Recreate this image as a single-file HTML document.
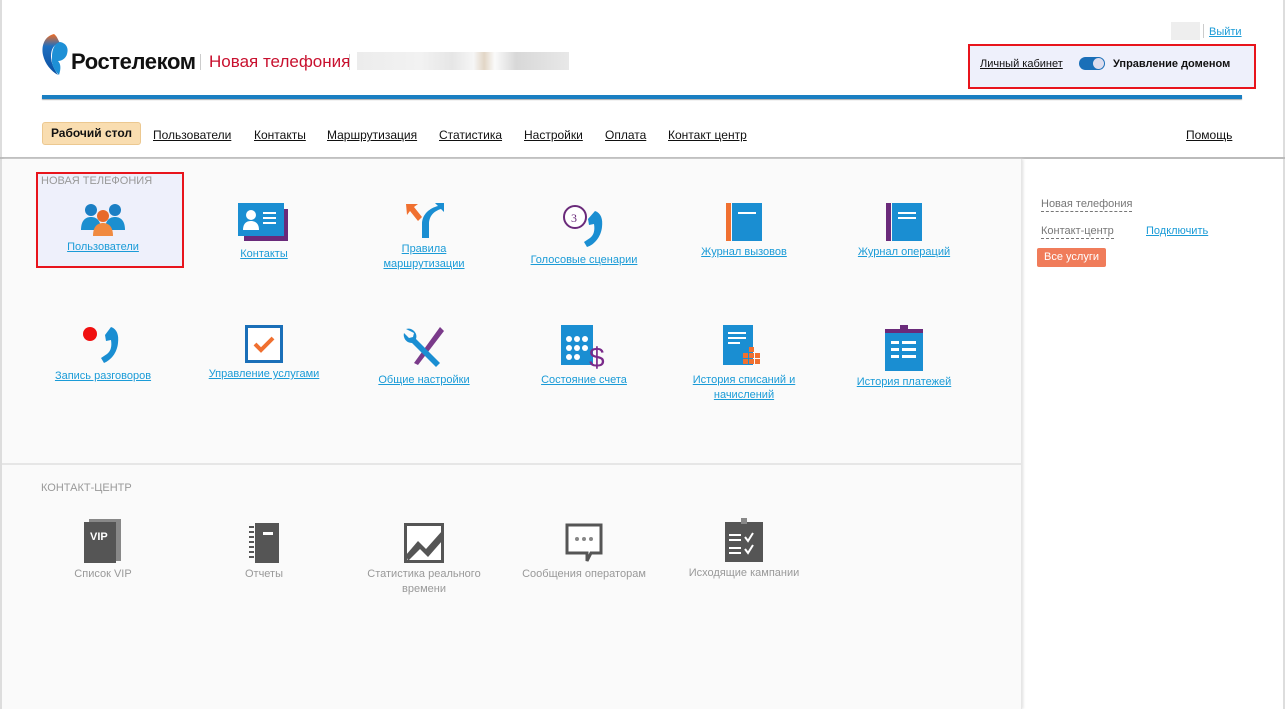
<!DOCTYPE html>
<html><head><meta charset="utf-8"><style>
*{margin:0;padding:0;box-sizing:border-box}
body{width:1285px;height:709px;overflow:hidden;background:#fff;font-family:"Liberation Sans",Arial,sans-serif;font-size:12px}
.a{position:absolute}
a{color:#1a9bd7;text-decoration:underline}
.nav a{color:#111;position:absolute;top:128px;font-size:12px}
.item{position:absolute;width:160px;text-align:center;font-size:11px;line-height:15px}
.item svg{display:block;margin:0 auto 4px}
.g{color:#999}
</style></head><body>
<div class="a" style="left:0;top:0;width:2px;height:709px;background:#ddd"></div>
<div class="a" style="left:1283px;top:0;width:2px;height:709px;background:#ddd"></div>
<!-- header -->
<svg class="a" style="left:40px;top:33px" width="30" height="44" viewBox="0 0 30 44"><defs><linearGradient id="lg" x1="0" y1="0" x2="0" y2="1"><stop offset="0" stop-color="#f36c21"/><stop offset=".3" stop-color="#1e6fc0"/><stop offset="1" stop-color="#0a4ea0"/></linearGradient></defs><path d="M14 1C5 3 1 12 3 22c2 9 8 16 15 20-4-6-7-12-7-19 0-7 3-12 9-13C18 7 17 3 14 1z" fill="url(#lg)"/><path d="M20 9c6 1 9 6 7 12-1 4-5 7-9 7 3 3 3 8 1 14-5-5-8-11-7-18 0-8 3-14 8-15z" fill="#1e90d6"/></svg>
<div class="a" style="left:71px;top:49px;font-size:22px;font-weight:bold;color:#111;letter-spacing:-0.4px">Ростелеком</div>
<div class="a" style="left:200px;top:54px;width:1px;height:16px;background:#ccc"></div>
<div class="a" style="left:209px;top:52px;font-size:17px;color:#c8102e">Новая телефония</div>
<div class="a" style="left:349px;top:54px;width:1px;height:16px;background:#ccc"></div>
<div class="a" style="left:357px;top:52px;width:212px;height:18px;background:linear-gradient(90deg,#ececec,#f2f2f2 30%,#e6e6e6 45%,#f6f6f6 55%,#e2d6c6 60%,#fafafa 65%,#d8d8d8 75%,#e8e8e8)"></div>
<div class="a" style="left:1171px;top:22px;width:29px;height:18px;background:#eee"></div>
<div class="a" style="left:1203px;top:24px;width:1px;height:14px;background:#ccc"></div>
<a class="a" style="left:1209px;top:26px;font-size:11px" href="#">Выйти</a>
<div class="a" style="left:968px;top:44px;width:288px;height:45px;border:2px solid #e8141c;background:#eef0fb"></div>
<a class="a" style="left:980px;top:58px;color:#111;font-size:11px" href="#">Личный кабинет </a>
<div class="a" style="left:1079px;top:57px;width:26px;height:13px;border-radius:7px;background:#1a6fb8"><div style="position:absolute;right:1px;top:1px;width:11px;height:11px;border-radius:50%;background:#dde"></div></div>
<div class="a" style="left:1113px;top:58px;font-size:11px;font-weight:bold;color:#111">Управление доменом</div>
<div class="a" style="left:42px;top:95px;width:1200px;height:4px;background:#1a7fc2;box-shadow:0 1px 1px #aaa"></div>
<div class="a" style="left:42px;top:122px;width:99px;height:23px;background:#f9ddb0;border:1px solid #ecc890;border-radius:3px;font-weight:bold;text-align:center;line-height:21px;color:#111">Рабочий стол</div>
<div class="nav"><a style="left:153px">Пользователи</a><a style="left:254px">Контакты</a><a style="left:327px">Маршрутизация</a><a style="left:439px">Статистика</a><a style="left:524px">Настройки</a><a style="left:605px">Оплата</a><a style="left:668px">Контакт центр</a><a style="left:1186px">Помощь</a></div>
<div class="a" style="left:0;top:157px;width:1285px;height:2px;background:#bbb"></div>
<!-- content -->
<div class="a" style="left:2px;top:159px;width:1020px;height:550px;background:#fafafa;border-right:1px solid #e6e6e6;box-shadow:1px 0 3px #ddd"></div>
<div class="a" style="left:2px;top:463px;width:1020px;height:2px;background:#e6e6e6"></div>
<div class="a" style="left:36px;top:172px;width:148px;height:96px;border:2px solid #e8141c;background:#eef0fb"></div>
<div class="a g" style="left:41px;top:175px;font-size:11px">НОВАЯ ТЕЛЕФОНИЯ</div>
<div class="a g" style="left:41px;top:482px;font-size:11px">КОНТАКТ-ЦЕНТР</div>

<div class="item" style="left:23px;top:202px"><svg width="44" height="34" viewBox="0 0 44 34"><circle cx="10" cy="8" r="6" fill="#1b7fc4"/><path d="M0 28c0-9 4-13 10-13s10 4 10 13z" fill="#1b8fd0"/><circle cx="34" cy="8" r="6" fill="#1b7fc4"/><path d="M24 28c0-9 4-13 10-13s10 4 10 13z" fill="#1b8fd0"/><circle cx="22" cy="14" r="6" fill="#e86a2a"/><path d="M12 34c0-9 4-13 10-13s10 4 10 13z" fill="#f08a40"/></svg><a href="#">Пользователи</a></div>
<div class="item" style="left:184px;top:203px"><svg width="52" height="40" viewBox="0 0 52 40"><rect x="6" y="6" width="44" height="32" fill="#6a2a7a"/><rect x="0" y="0" width="46" height="33" fill="#1a8ed2"/><circle cx="13" cy="12" r="5" fill="#fff"/><path d="M5 27c0-7 4-9 8-9s8 2 8 9z" fill="#fff"/><rect x="25" y="9" width="13" height="2" fill="#fff"/><rect x="25" y="14" width="13" height="2" fill="#fff"/><rect x="25" y="19" width="13" height="2" fill="#fff"/></svg><a href="#">Контакты</a></div>
<div class="item" style="left:344px;top:202px"><svg width="40" height="36" viewBox="0 0 40 36"><path d="M2 2l12 0-4 3 8 10-4 4-8-10-3 4z" fill="#f07030"/><path d="M18 36V22c0-10 8-16 16-18l-3-3h9v9l-3-3c-7 2-12 7-12 15v14z" fill="#1a8ed2"/></svg><a href="#">Правила<br>маршрутизации</a></div>
<div class="item" style="left:504px;top:203px"><svg width="46" height="46" viewBox="0 0 46 46"><circle cx="14" cy="14" r="11" fill="#fff" stroke="#6a2a7a" stroke-width="2"/><text x="10" y="19" font-size="12" font-family="Liberation Serif" fill="#6a2a7a">3</text><path d="M34 8c6 2 8 8 7 16-1 10-8 18-15 20l-3-5 6-4c4-3 5-8 4-14l-5 1-1-6z" fill="#1a8ed2"/></svg><a href="#">Голосовые сценарии</a></div>
<div class="item" style="left:664px;top:203px"><svg width="36" height="38" viewBox="0 0 36 38"><rect x="0" y="0" width="5" height="38" fill="#f07030"/><rect x="6" y="0" width="30" height="38" fill="#1a8ed2"/><rect x="12" y="9" width="18" height="2" fill="#fff"/></svg><a href="#">Журнал вызовов</a></div>
<div class="item" style="left:824px;top:203px"><svg width="36" height="38" viewBox="0 0 36 38"><rect x="0" y="0" width="5" height="38" fill="#6a2a7a"/><rect x="6" y="0" width="30" height="38" fill="#1a8ed2"/><rect x="12" y="9" width="18" height="2" fill="#fff"/><rect x="12" y="14" width="18" height="2" fill="#fff"/></svg><a href="#">Журнал операций</a></div>

<div class="item" style="left:23px;top:325px"><svg width="40" height="40" viewBox="0 0 40 40"><circle cx="7" cy="9" r="7" fill="#f01010"/><path d="M28 2c6 2 8 8 7 16-1 10-7 17-14 20l-3-5 6-4c4-3 5-8 4-14l-5 1-1-6z" fill="#1a8ed2"/></svg><a href="#">Запись разговоров</a></div>
<div class="item" style="left:184px;top:325px"><svg width="38" height="38" viewBox="0 0 38 38"><rect x="1.5" y="1.5" width="35" height="35" fill="#fff" stroke="#1a6fb8" stroke-width="3"/><path d="M10 19l6 6 12-12" fill="none" stroke="#f07030" stroke-width="4"/></svg><a href="#">Управление услугами</a></div>
<div class="item" style="left:344px;top:325px"><svg width="44" height="44" viewBox="0 0 44 44"><path d="M38 2l4 4-26 34-4-2z" fill="#7a3a8a"/><path d="M4 4a8 8 0 0 1 10 10l24 24-4 4-24-24A8 8 0 0 1 2 8l5 5 4-1 1-4z" fill="#1a8ed2"/></svg><a href="#">Общие настройки</a></div>
<div class="item" style="left:504px;top:325px"><svg width="46" height="44" viewBox="0 0 46 44"><rect x="0" y="0" width="32" height="40" fill="#1a8ed2"/><g fill="#fff"><circle cx="8" cy="14" r="3"/><circle cx="16" cy="14" r="3"/><circle cx="24" cy="14" r="3"/><circle cx="8" cy="23" r="3"/><circle cx="16" cy="23" r="3"/><circle cx="24" cy="23" r="3"/><circle cx="8" cy="32" r="3"/><circle cx="16" cy="32" r="3"/></g><text x="28" y="42" font-size="28" font-family="Liberation Sans" fill="#7a2a8a">$</text></svg><a href="#">Состояние счета</a></div>
<div class="item" style="left:664px;top:325px"><svg width="42" height="44" viewBox="0 0 42 44"><rect x="0" y="0" width="30" height="40" fill="#1a8ed2"/><g fill="#fff"><rect x="5" y="7" width="18" height="2"/><rect x="5" y="12" width="18" height="2"/><rect x="5" y="17" width="12" height="2"/></g><g fill="#f07030"><rect x="26" y="22" width="5" height="5"/><rect x="20" y="28" width="5" height="5"/><rect x="26" y="28" width="5" height="5"/><rect x="32" y="28" width="5" height="5"/><rect x="20" y="34" width="5" height="5"/><rect x="26" y="34" width="5" height="5"/><rect x="32" y="34" width="5" height="5"/></g></svg><a href="#">История списаний и<br>начислений</a></div>
<div class="item" style="left:824px;top:325px"><svg width="38" height="46" viewBox="0 0 38 46"><rect x="0" y="4" width="38" height="42" fill="#1a8ed2"/><rect x="0" y="4" width="38" height="4" fill="#6a2a7a"/><rect x="15" y="0" width="8" height="6" fill="#6a2a7a"/><g fill="#fff"><rect x="6" y="16" width="8" height="3"/><rect x="17" y="16" width="14" height="3"/><rect x="6" y="23" width="8" height="3"/><rect x="17" y="23" width="14" height="3"/><rect x="6" y="30" width="8" height="3"/><rect x="17" y="30" width="14" height="3"/></g></svg><a href="#">История платежей</a></div>

<div class="item g" style="left:23px;top:519px"><svg width="38" height="44" viewBox="0 0 38 44"><rect x="5" y="0" width="32" height="42" fill="#888"/><rect x="0" y="3" width="32" height="41" fill="#555"/><text x="6" y="21" font-size="11" font-weight="bold" font-family="Liberation Sans" fill="#fff">VIP</text></svg>Список VIP</div>
<div class="item g" style="left:184px;top:523px"><svg width="30" height="40" viewBox="0 0 30 40"><rect x="6" y="0" width="24" height="40" fill="#555"/><g fill="#555"><rect x="0" y="3" width="5" height="2"/><rect x="0" y="8" width="5" height="2"/><rect x="0" y="13" width="5" height="2"/><rect x="0" y="18" width="5" height="2"/><rect x="0" y="23" width="5" height="2"/><rect x="0" y="28" width="5" height="2"/><rect x="0" y="33" width="5" height="2"/></g><rect x="14" y="9" width="10" height="3" fill="#fff"/></svg>Отчеты</div>
<div class="item g" style="left:344px;top:523px"><svg width="40" height="40" viewBox="0 0 40 40"><rect x="1.5" y="1.5" width="37" height="37" fill="#fff" stroke="#555" stroke-width="3"/><path d="M2 32l12-14 8 8 16-18v10l-14 16-8-8-12 12z" fill="#555"/></svg>Статистика реального<br>времени</div>
<div class="item g" style="left:504px;top:523px"><svg width="40" height="40" viewBox="0 0 40 40"><path d="M3 2h34v28h-10l-4 8v-8h-20z" fill="#fff" stroke="#555" stroke-width="3"/><g fill="#888"><circle cx="13" cy="16" r="2"/><circle cx="20" cy="16" r="2"/><circle cx="27" cy="16" r="2"/></g></svg>Сообщения операторам</div>
<div class="item g" style="left:664px;top:518px"><svg width="38" height="44" viewBox="0 0 38 44"><rect x="0" y="4" width="38" height="40" fill="#555"/><rect x="16" y="0" width="6" height="6" fill="#888"/><g fill="#fff"><rect x="4" y="16" width="12" height="2"/><rect x="4" y="21" width="12" height="2"/><rect x="4" y="29" width="12" height="2"/><rect x="4" y="34" width="12" height="2"/></g><path d="M20 19l3 4 5-8M20 31l3 4 5-8" fill="none" stroke="#fff" stroke-width="2"/></svg>Исходящие кампании</div>

<!-- right panel -->
<div class="a" style="left:1041px;top:197px;color:#777;font-size:11px;border-bottom:1px dashed #777;line-height:14px">Новая телефония</div>
<div class="a" style="left:1041px;top:224px;color:#777;font-size:11px;border-bottom:1px dashed #777;line-height:14px">Контакт-центр</div>
<a class="a" style="left:1146px;top:224px;font-size:11px;line-height:14px" href="#">Подключить</a>
<div class="a" style="left:1037px;top:248px;width:69px;height:19px;background:#f07c5a;border-radius:2px;color:#fff;font-size:11px;text-align:center;line-height:19px">Все услуги</div>
</body></html>
